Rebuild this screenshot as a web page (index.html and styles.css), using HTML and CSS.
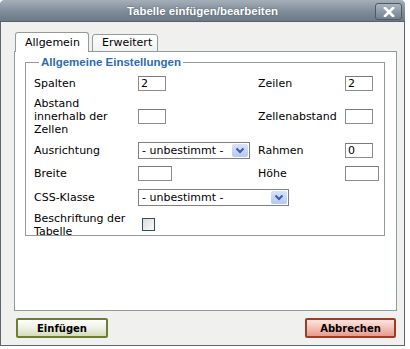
FILE: index.html
```html
<!DOCTYPE html>
<html lang="de">
<head>
    <meta charset="UTF-8">
    <meta name="viewport" content="width=device-width, initial-scale=1.0">
    <title>Tabelle einfügen/bearbeiten</title>
    <link rel="stylesheet" href="styles.css">
</head>
<body>
    <div class="dialog">
        <div class="titlebar">
            <span class="title">Tabelle einfügen/bearbeiten</span>
            <span class="close">
                <svg width="12" height="10" viewBox="0 0 12 10"><path d="M2 1 L10 9 M10 1 L2 9" stroke="#fff" stroke-width="2.6" stroke-linecap="square"/></svg>
            </span>
        </div>
        <div class="content">
            <div class="tabs">
                <span class="tab active">Allgemein</span>
                <span class="tab">Erweitert</span>
            </div>
            <div class="panel">
                <fieldset>
                    <legend>Allgemeine Einstellungen</legend>
                    <div class="grid">
                        <label class="first">Spalten</label>
                        <div><input class="small" type="text" value="2"></div>
                        <label>Zeilen</label>
                        <div><input class="small" type="text" value="2"></div>

                        <label class="first">Abstand innerhalb der Zellen</label>
                        <div><input class="small" type="text"></div>
                        <label>Zellenabstand</label>
                        <div><input class="small" type="text"></div>

                        <label class="first">Ausrichtung</label>
                        <div>
                            <div class="select align">
                                <span>- unbestimmt -</span>
                                <span class="arrow"><svg width="10" height="7" viewBox="0 0 10 7"><path d="M1.5 1.5 L5 5 L8.5 1.5" fill="none" stroke="#3d5d9e" stroke-width="2"/></svg></span>
                            </div>
                        </div>
                        <label>Rahmen</label>
                        <div><input class="small" type="text" value="0"></div>

                        <label class="first">Breite</label>
                        <div><input class="wide" type="text"></div>
                        <label>Höhe</label>
                        <div><input class="wide" type="text"></div>

                        <label class="first">CSS-Klasse</label>
                        <div class="span2">
                            <div class="select css">
                                <span>- unbestimmt -</span>
                                <span class="arrow"><svg width="10" height="7" viewBox="0 0 10 7"><path d="M1.5 1.5 L5 5 L8.5 1.5" fill="none" stroke="#3d5d9e" stroke-width="2"/></svg></span>
                            </div>
                        </div>

                        <label class="first">Beschriftung der Tabelle</label>
                        <div><span class="checkbox"></span></div>
                    </div>
                </fieldset>
            </div>
            <div class="actions">
                <button class="insert">Einfügen</button>
                <button class="cancel">Abbrechen</button>
            </div>
        </div>
    </div>
</body>
</html>
```

FILE: styles.css
```css
body {
    margin: 0;
    background: #fff;
    font-family: "DejaVu Sans", Verdana, sans-serif;
    font-size: 11px;
    color: #000;
}
.dialog {
    width: 405px;
    height: 346px;
    background: #f0f0ee;
    border: 1px solid #5b6672;
    border-top: none;
    border-radius: 5px 5px 0 0;
    box-sizing: border-box;
}
.titlebar {
    height: 22px;
    margin: 0 -1px;
    background: linear-gradient(#a5afba, #7c8996 60%, #6c7a87);
    border-radius: 5px 5px 0 0;
    border-bottom: 1px solid #56616c;
    box-sizing: border-box;
    display: flex;
    align-items: center;
    justify-content: center;
    position: relative;
}
.title {
    font-family: "Liberation Sans", Arial, sans-serif;
    font-weight: bold;
    font-size: 11.5px;
    color: #fff;
    text-shadow: 0 0 2px #4b5662;
}
.close {
    position: absolute;
    right: 3px;
    top: 3px;
    width: 25px;
    height: 15px;
    border: 1px solid #4c5966;
    border-radius: 3px;
    background: linear-gradient(#aab4be, #728090);
    display: flex;
    align-items: center;
    justify-content: center;
}
.content {
    padding: 10px 7px 0 13px;
}
.tabs {
    display: flex;
    align-items: flex-end;
    gap: 3px;
    padding-left: 1px;
    margin-bottom: -1px;
    position: relative;
}
.tab {
    height: 16px;
    line-height: 16px;
    width: 55px;
    padding: 0 0 0 9px;
    border: 1px solid #919b9c;
    border-radius: 3px 3px 0 0;
    background: linear-gradient(#fff, #f1f1ef);
}
.tab.active {
    height: 19px;
    line-height: 19px;
    width: 63px;
    border-bottom: none;
    background: #fff;
}
.panel {
    height: 260px;
    border: 1px solid #919b9c;
    background: #fff;
    box-sizing: border-box;
    padding: 4px 11px 0 10px;
}
fieldset {
    margin: 0;
    padding: 6px 8px 0 8px;
    border: 1px solid #919b9c;
    height: 172px;
    min-width: 0;
}
legend {
    font-family: "Liberation Sans", Arial, sans-serif;
    font-weight: bold;
    font-size: 11.5px;
    color: #2b6cb2;
    padding: 0 2px;
    margin-left: 5px;
}
.grid {
    display: grid;
    grid-template-columns: 104px 120px 87px 40px;
    grid-template-rows: 19px 46px 23px 23px 24px 31px;
    align-items: center;
    line-height: 13px;
}
.grid label {
    max-width: 96px;
}
.grid .first {
    grid-column-start: 1;
}
.span2 {
    grid-column: span 2;
}
input {
    font-family: "DejaVu Sans", Verdana, sans-serif;
    font-size: 11px;
    height: 15px;
    padding: 0 2px;
    border: 1px solid #8c8c8c;
    border-top-color: #7a7a7a;
    box-sizing: border-box;
    display: block;
    outline: none;
}
input.small {
    width: 28px;
}
input.wide {
    width: 34px;
}
.select {
    height: 17px;
    border: 1px solid #7f7f7f;
    box-sizing: border-box;
    display: flex;
    align-items: center;
    justify-content: space-between;
    padding: 0 1px 0 3px;
    background: #fff;
}
.select.align {
    width: 112px;
}
.select.css {
    width: 151px;
}
.arrow {
    width: 16px;
    height: 13px;
    border-radius: 2px;
    background: linear-gradient(#d7e3fb, #b4c8f2);
    display: flex;
    align-items: center;
    justify-content: center;
}
.checkbox {
    display: block;
    width: 13px;
    height: 13px;
    margin-left: 4px;
    border: 1px solid #2b4c73;
    background: linear-gradient(135deg, #dcdcd5, #fbfbf9);
    box-sizing: border-box;
}
.actions {
    display: flex;
    justify-content: space-between;
    margin-top: 7px;
    padding: 0 1px 0 2px;
}
button {
    height: 20px;
    font-family: "DejaVu Sans", Verdana, sans-serif;
    font-weight: bold;
    font-size: 10px;
    color: #000;
    border: 2px solid;
    border-radius: 2px;
    padding: 0;
    cursor: pointer;
}
.insert {
    width: 92px;
    border-color: #6f7d34;
    background: linear-gradient(#ffffff, #e9eddc 60%, #d4dcbb);
}
.cancel {
    width: 91px;
    border-color: #a23a28;
    background: linear-gradient(#fde5df, #f2b8ac 60%, #e69c8d);
}
```
